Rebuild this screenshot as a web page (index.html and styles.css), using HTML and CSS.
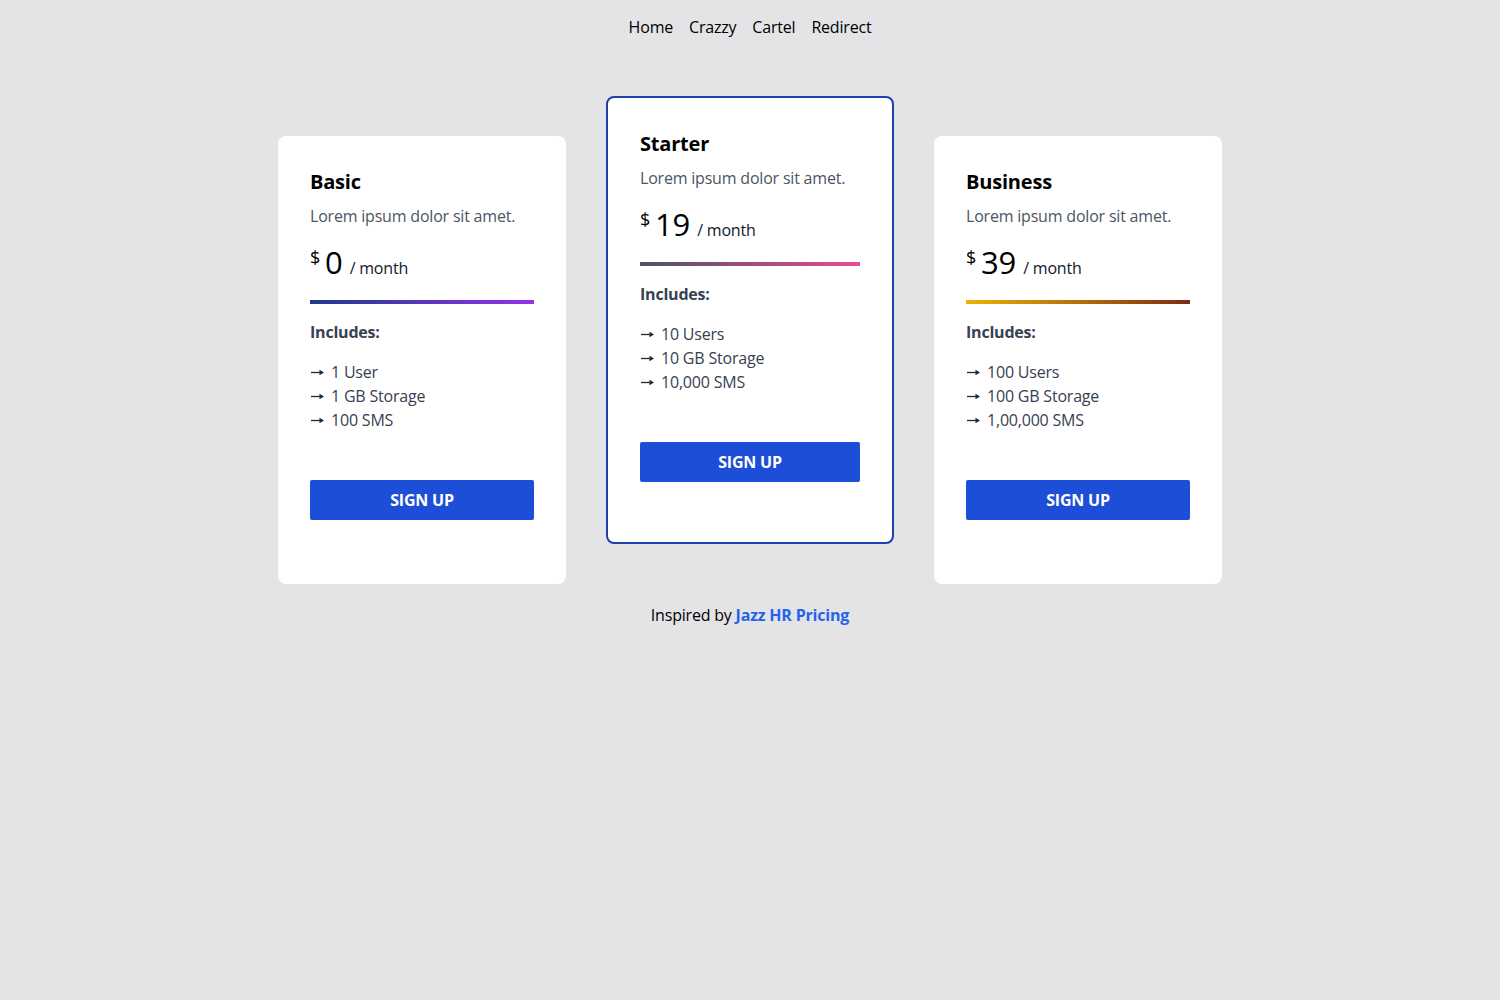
FILE: index.html
```html
<!DOCTYPE html>
<html lang="en">
<head>
<meta charset="utf-8">
<title>Pricing</title>
<link rel="stylesheet" href="styles.css">
</head>
<body>
<nav class="nav">
  <a href="#">Home</a>
  <a href="#">Crazzy</a>
  <a href="#">Cartel</a>
  <a href="#">Redirect</a>
</nav>
<main class="plans">
  <section class="card">
    <h2 class="title">Basic</h2>
    <p class="desc">Lorem ipsum dolor sit amet.</p>
    <div class="price"><span class="cur">$</span><span class="amount">0</span><span class="per">/ month</span></div>
    <div class="bar bar-basic"></div>
    <p class="inc">Includes:</p>
    <ul class="features">
      <li><svg class="arrow" viewBox="0 0 13 7" aria-hidden="true"><path d="M0 3.5h9" stroke="currentColor" stroke-width="1.3"/><path d="M8.5 0.8L13 3.5L8.5 6.2Z" fill="currentColor"/></svg>1 User</li>
      <li><svg class="arrow" viewBox="0 0 13 7" aria-hidden="true"><path d="M0 3.5h9" stroke="currentColor" stroke-width="1.3"/><path d="M8.5 0.8L13 3.5L8.5 6.2Z" fill="currentColor"/></svg>1 GB Storage</li>
      <li><svg class="arrow" viewBox="0 0 13 7" aria-hidden="true"><path d="M0 3.5h9" stroke="currentColor" stroke-width="1.3"/><path d="M8.5 0.8L13 3.5L8.5 6.2Z" fill="currentColor"/></svg>100 SMS</li>
    </ul>
    <button class="btn">SIGN UP</button>
  </section>
  <section class="card card-featured">
    <h2 class="title">Starter</h2>
    <p class="desc">Lorem ipsum dolor sit amet.</p>
    <div class="price"><span class="cur">$</span><span class="amount">19</span><span class="per">/ month</span></div>
    <div class="bar bar-starter"></div>
    <p class="inc">Includes:</p>
    <ul class="features">
      <li><svg class="arrow" viewBox="0 0 13 7" aria-hidden="true"><path d="M0 3.5h9" stroke="currentColor" stroke-width="1.3"/><path d="M8.5 0.8L13 3.5L8.5 6.2Z" fill="currentColor"/></svg>10 Users</li>
      <li><svg class="arrow" viewBox="0 0 13 7" aria-hidden="true"><path d="M0 3.5h9" stroke="currentColor" stroke-width="1.3"/><path d="M8.5 0.8L13 3.5L8.5 6.2Z" fill="currentColor"/></svg>10 GB Storage</li>
      <li><svg class="arrow" viewBox="0 0 13 7" aria-hidden="true"><path d="M0 3.5h9" stroke="currentColor" stroke-width="1.3"/><path d="M8.5 0.8L13 3.5L8.5 6.2Z" fill="currentColor"/></svg>10,000 SMS</li>
    </ul>
    <button class="btn">SIGN UP</button>
  </section>
  <section class="card">
    <h2 class="title">Business</h2>
    <p class="desc">Lorem ipsum dolor sit amet.</p>
    <div class="price"><span class="cur">$</span><span class="amount">39</span><span class="per">/ month</span></div>
    <div class="bar bar-business"></div>
    <p class="inc">Includes:</p>
    <ul class="features">
      <li><svg class="arrow" viewBox="0 0 13 7" aria-hidden="true"><path d="M0 3.5h9" stroke="currentColor" stroke-width="1.3"/><path d="M8.5 0.8L13 3.5L8.5 6.2Z" fill="currentColor"/></svg>100 Users</li>
      <li><svg class="arrow" viewBox="0 0 13 7" aria-hidden="true"><path d="M0 3.5h9" stroke="currentColor" stroke-width="1.3"/><path d="M8.5 0.8L13 3.5L8.5 6.2Z" fill="currentColor"/></svg>100 GB Storage</li>
      <li><svg class="arrow" viewBox="0 0 13 7" aria-hidden="true"><path d="M0 3.5h9" stroke="currentColor" stroke-width="1.3"/><path d="M8.5 0.8L13 3.5L8.5 6.2Z" fill="currentColor"/></svg>1,00,000 SMS</li>
    </ul>
    <button class="btn">SIGN UP</button>
  </section>
</main>
<footer class="footer">Inspired by <a href="#">Jazz HR Pricing</a></footer>
</body>
</html>
```
FILE: styles.css
```css
* { box-sizing: border-box; }
html, body { margin: 0; padding: 0; }
body {
  background: #e4e4e7;
  font-family: "Open Sans", "Noto Sans", sans-serif;
  font-size: 16px;
  line-height: 24px;
  letter-spacing: -0.2px;
  color: #000;
}
.nav {
  display: flex;
  justify-content: center;
  gap: 16px;
  padding-top: 15px;
}
.nav a { color: #000; text-decoration: none; }
.plans {
  display: flex;
  justify-content: center;
  align-items: flex-start;
  gap: 40px;
  margin-top: 57px;
}
.card {
  width: 288px;
  background: #fff;
  border-radius: 8px;
  padding: 32px 32px 64px;
  margin-top: 40px;
}
.card-featured {
  margin-top: 0;
  border: 2px solid #1e40af;
  padding: 32px 32px 60px;
}
.title { margin: 0; font-size: 20px; line-height: 28px; font-weight: 700; }
.desc { margin: 8px 0 0; color: #4b5563; }
.price { margin-top: 16px; height: 36px; line-height: 36px; white-space: nowrap; }
.cur { font-size: 18px; line-height: 24px; vertical-align: top; margin-right: 5px; position: relative; top: 1px; }
.amount { font-size: 31px; }
.per { font-size: 16px; margin-left: 7px; color: #111827; }
.bar { height: 4px; margin-top: 20px; }
.bar-basic { background: linear-gradient(to right, #1e3a8a, #9333ea); }
.bar-starter { background: linear-gradient(to right, #4b5563, #ec4899); }
.bar-business { background: linear-gradient(to right, #eab308, #7c2d12); }
.inc { margin: 16px 0 0; font-weight: 700; color: #374151; }
.features { list-style: none; margin: 16px 0 0; padding: 0; color: #374151; }
.features li { display: flex; align-items: center; }
.arrow { width: 13px; height: 7px; margin: 0 7px 0 1px; color: #1f2937; flex: none; }
.btn {
  display: block;
  width: 100%;
  height: 40px;
  margin-top: 48px;
  border: 0;
  border-radius: 2px;
  background: #1d4ed8;
  color: #fff;
  font: inherit;
  font-weight: 700;
  letter-spacing: -0.2px;
}
.footer { text-align: center; margin-top: 19px; }
.footer a { color: #2563eb; font-weight: 700; text-decoration: none; }
```
